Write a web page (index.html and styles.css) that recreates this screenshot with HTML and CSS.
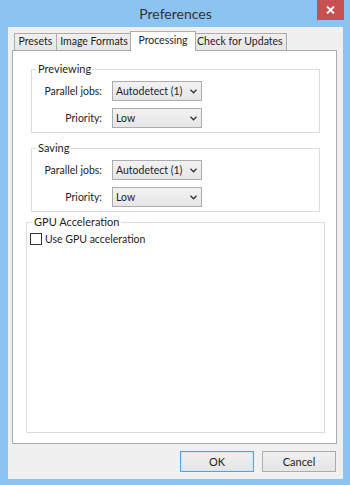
FILE: index.html
```html
<!DOCTYPE html>
<html lang="en">
<head>
    <meta charset="UTF-8">
    <meta name="viewport" content="width=device-width, initial-scale=1.0">
    <title>Preferences</title>
    <link rel="stylesheet" href="styles.css">
</head>
<body>
    <div class="window">
        <div class="titlebar">
            <span class="title">Preferences</span>
        </div>
        <button class="close" aria-label="Close">
            <svg width="9" height="8" viewBox="0 0 9 8"><path d="M1 0.5 L8 7.5 M8 0.5 L1 7.5" stroke="#fff" stroke-width="1.8"/></svg>
        </button>

        <div class="client">
            <div class="tabs">
                <div class="tab">Presets</div>
                <div class="tab">Image Formats</div>
                <div class="tab active">Processing</div>
                <div class="tab">Check for Updates</div>
            </div>

            <div class="panel">
                <fieldset class="group">
                    <legend>Previewing</legend>
                    <div class="field-grid">
                        <label>Parallel jobs:</label>
                        <div class="combo">Autodetect (1)<svg class="arrow" width="7" height="5" viewBox="0 0 7 5"><path d="M0.5 0.8 L3.5 3.8 L6.5 0.8" fill="none" stroke="#333" stroke-width="1.3"/></svg></div>
                        <label>Priority:</label>
                        <div class="combo">Low<svg class="arrow" width="7" height="5" viewBox="0 0 7 5"><path d="M0.5 0.8 L3.5 3.8 L6.5 0.8" fill="none" stroke="#333" stroke-width="1.3"/></svg></div>
                    </div>
                </fieldset>

                <fieldset class="group">
                    <legend>Saving</legend>
                    <div class="field-grid">
                        <label>Parallel jobs:</label>
                        <div class="combo">Autodetect (1)<svg class="arrow" width="7" height="5" viewBox="0 0 7 5"><path d="M0.5 0.8 L3.5 3.8 L6.5 0.8" fill="none" stroke="#333" stroke-width="1.3"/></svg></div>
                        <label>Priority:</label>
                        <div class="combo">Low<svg class="arrow" width="7" height="5" viewBox="0 0 7 5"><path d="M0.5 0.8 L3.5 3.8 L6.5 0.8" fill="none" stroke="#333" stroke-width="1.3"/></svg></div>
                    </div>
                </fieldset>

                <fieldset class="group gpu">
                    <legend>GPU Acceleration</legend>
                    <label class="check"><span class="box"></span>Use GPU acceleration</label>
                </fieldset>
            </div>

            <div class="buttons">
                <button class="btn default">OK</button>
                <button class="btn">Cancel</button>
            </div>
        </div>
    </div>
</body>
</html>
```

FILE: styles.css
```css
/* Reset */
* {
    margin: 0;
    padding: 0;
    box-sizing: border-box;
}

body {
    font-family: 'Segoe UI', Lato, 'Liberation Sans', sans-serif;
    font-size: 10.5px;
    color: #1e1e1e;
    background: #8cc4f1;
}

/* Window frame */
.window {
    position: relative;
    width: 350px;
    height: 485px;
    display: flex;
    flex-direction: column;
    padding: 0 7px 6px 8px;
    background: #8cc4f1;
}

.titlebar {
    height: 27px;
    text-align: center;
    line-height: 27px;
}

.title {
    font-size: 14px;
    color: #333;
}

.close {
    position: absolute;
    top: 0;
    right: 6px;
    width: 27px;
    height: 20px;
    border: none;
    background: #c75050;
    display: flex;
    align-items: center;
    justify-content: center;
}

.client {
    flex: 1;
    display: flex;
    flex-direction: column;
    background: #f0f0f0;
    padding: 4px 6px 7px 4px;
}

/* Tabs */
.tabs {
    display: flex;
    align-items: flex-end;
    padding-left: 2px;
    position: relative;
    z-index: 1;
}

.tab {
    height: 17px;
    line-height: 15px;
    padding: 0 3.5px;
    border: 1px solid #acacac;
    border-bottom: none;
    background: linear-gradient(#f0f0f0, #e5e5e5);
    margin-left: -1px;
}

.tab:first-child {
    margin-left: 0;
}

.tab.active {
    height: 20px;
    line-height: 16px;
    margin: 0 -2px -1px -2px;
    padding: 0 7px;
    background: #fff;
    position: relative;
}

.panel {
    flex: 1;
    display: flex;
    flex-direction: column;
    background: #fff;
    border: 1px solid #acacac;
}

/* Group boxes */
.group {
    border: 1px solid #dcdcdc;
    margin: 11px 16px 0 18px;
    padding: 0 0 4px 0;
}

.group + .group {
    margin-top: 8px;
}

.group legend {
    line-height: 14px;
    padding: 0 2px;
    margin-left: 4px;
    font-size: 11px;
}

.field-grid {
    display: grid;
    grid-template-columns: 70px 90px;
    column-gap: 10px;
    row-gap: 7px;
    align-items: center;
    padding-top: 5px;
}

.field-grid label {
    text-align: right;
}

.combo {
    height: 20px;
    display: flex;
    align-items: center;
    justify-content: space-between;
    padding: 0 4px 0 3px;
    border: 1px solid #acacac;
    background: linear-gradient(#f2f2f2, #e6e6e6);
}

.group.gpu {
    flex: 1;
    margin: 3px 11px 10px 13px;
}

.group.gpu legend {
    margin-left: 5px;
}

.check {
    display: flex;
    align-items: center;
    gap: 3px;
    padding: 4px 0 0 3px;
}

.box {
    width: 12px;
    height: 12px;
    border: 1px solid #333;
    background: #fff;
}

/* Dialog buttons */
.buttons {
    display: flex;
    justify-content: flex-end;
    gap: 8px;
    margin-top: 7px;
    padding-right: 1px;
}

.btn {
    width: 74px;
    height: 21px;
    font-family: inherit;
    font-size: 11px;
    color: #1e1e1e;
    border: 1px solid #acacac;
    background: linear-gradient(#f0f0f0, #e5e5e5);
}

.btn.default {
    border-color: #5a9fdf;
    box-shadow: inset 0 0 0 1px #cde6f9;
}
```
